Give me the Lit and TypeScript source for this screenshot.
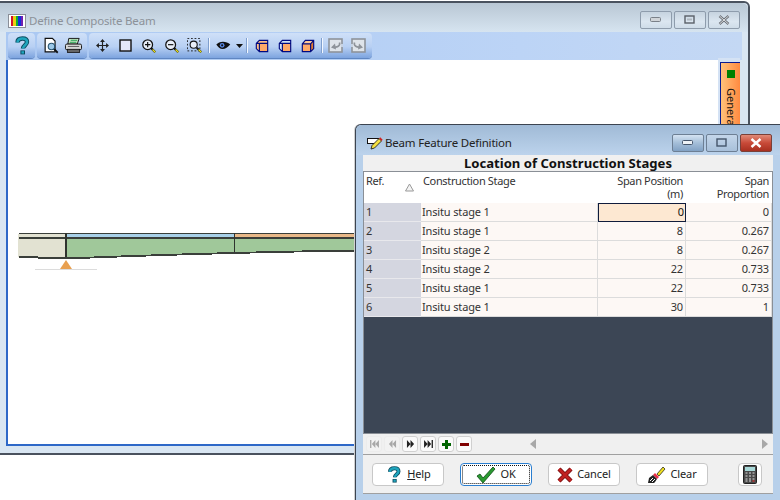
import { LitElement, html, css, svg } from "lit";
import { customElement } from "lit/decorators.js";

const help = (s = 20) => html`<svg width=${s} height=${s} viewBox="0 0 20 20">
  <path d="M5.5 6.5C5.5 3.5 8 2.5 10.5 2.5c3 0 4.5 1.6 4.5 3.6 0 3-4 3.2-4 6.4" fill="none" stroke="#0b4a5e" stroke-width="4.4"/>
  <rect x="8.4" y="14.4" width="4.6" height="4" fill="#0b4a5e"/>
  <path d="M5.5 6.5C5.5 3.5 8 2.5 10.5 2.5c3 0 4.5 1.6 4.5 3.6 0 3-4 3.2-4 6.4" fill="none" stroke="#1fa5bd" stroke-width="2.6"/>
  <rect x="9.4" y="15.2" width="2.6" height="2.4" fill="#1fa5bd"/></svg>`;

const lens = (inner: unknown) => html`<svg width="16" height="16" viewBox="0 0 18 18">
  <path d="M11 11l5 5" stroke="#111" stroke-width="2.4"/><path d="M13 13l3 3" stroke="#e8e020" stroke-width="1.6"/>
  <circle cx="7.5" cy="7.5" r="5.5" fill="#e8eef8" stroke="#111" stroke-width="1.4"/>${inner}</svg>`;

const backCube = (front: string, top: string) => html`<svg width="14" height="14" viewBox="0 0 16 16">
  <path d="M1.5 5L5 1.5H14.5V14.5H5L1.5 11z" fill=${top}/>
  <rect x="5" y="5" width="9.5" height="9.5" fill=${front}/>
  <path d="M1.5 5L5 1.5H14.5V14.5H5L1.5 11zM5 14.5V5H14.5M1.5 5L5 5" fill="none" stroke="#000a80" stroke-width="1.3"/></svg>`;

const cube = (a: string, b: string, c: string) => html`<svg width="14" height="14" viewBox="0 0 16 16">
  <path d="M1.5 5.5L5 1.5h9.5v9.5l-3.5 3.5H1.5z" fill=${a}/>
  <path d="M11 5.5L14.5 1.5V11L11 14.5z" fill=${b}/><path d="M1.5 5.5L5 1.5H14.5L11 5.5z" fill=${c}/>
  <path d="M1.5 5.5L5 1.5h9.5v9.5l-3.5 3.5H1.5zM1.5 5.5H11V14.5M11 5.5l3.5-4" fill="none" stroke="#000a80" stroke-width="1.3"/></svg>`;

const doc = (flip: boolean) => html`<svg width="15" height="15" viewBox="0 0 15 15" class=${flip ? "flip" : ""}>
  <rect x="1" y="1" width="13" height="13" fill="#dfe4ea" stroke="#8e939a" stroke-width="1.6"/>
  <path d="M11.5 4.5C12.5 8 9 9.5 6 9" fill="none" stroke="#8e939a" stroke-width="1.6"/>
  <path d="M3 9.5L7 5.5 8 11.5z" fill="#8e939a"/>
  <rect x="13" y="6" width="2" height="3" fill="#c8d4e4"/></svg>`;

const navIcon = (d: string) => html`<svg width="9" height="8" viewBox="0 0 10 9"><path d=${d} fill="currentColor"/></svg>`;

const beamSteps: [number, number, number][] = [
  [66, 94, 257], [94, 121, 256], [121, 151, 255], [151, 182, 254],
  [182, 217, 253], [217, 256, 252], [256, 302, 251], [302, 365, 250],
];
const stepGap = [90, 117, 146, 177, 212, 250, 294, 365];

@customElement("app-root")
export class AppRoot extends LitElement {
  static styles = css`
    :host { display: block; position: relative; width: 780px; height: 500px; overflow: hidden; background: #fff;
      font-family: "Noto Sans", "Liberation Sans", sans-serif; font-size: 11px; color: #222; }
    .win { position: absolute; box-sizing: border-box; display: flex; flex-direction: column; }
    .w1 { left: -2px; top: 1px; width: 752px; height: 454px; border: 2px solid #4a525e;
      border-top-right-radius: 6px; background: #d9e6f2; padding: 0 6px 7px 6px; }
    .tb1 { height: 29px; flex: none; display: flex; align-items: center; gap: 3px; margin: 0 -6px; padding: 7px 8px 0 8px; box-sizing: border-box;
      background: linear-gradient(#b9c7d4, #d6e4f0); border-radius: 0 6px 0 0; }
    .t1 { color: #8c9299; font-size: 11.5px; letter-spacing: -0.2px; flex: 1; line-height: 16px; }
    .appicon { width: 18px; height: 14px; box-sizing: border-box; background: #fff; border: 1px solid #8a8f98; display: flex; padding: 1px 2px; }
    .appicon i { flex: 1; }
    .wbtns { display: flex; gap: 2px; }
    .wb { width: 32px; height: 18px; box-sizing: border-box; border: 1px solid #8e9cac; border-radius: 2px; display: flex; align-items: center; justify-content: center;
      background: linear-gradient(#c6d3df, #dbe6f0 60%, #cfdce8); }
    .w1 .wbtns { margin-top: -3px; }
    .toolbar { height: 28px; flex: none; background: linear-gradient(90deg, #aac8f2, #bcd4f6 70%, #c4d8f4); display: flex; gap: 2px; padding: 1px 0 2px 2px; box-sizing: border-box; }
    .grp { display: flex; align-items: center; height: 25px; border-radius: 4px; background: linear-gradient(#cfe0f8, #b8d0f3 55%, #7da4df); padding: 0 2px; box-shadow: 0 1px 0 #5f86c2; }
    .ti { width: 23px; height: 22px; display: flex; align-items: center; justify-content: center; flex: none; }
    .ti.eye { width: 22px; }
    .ti.arrow { width: 10px; }
    .sep { width: 1px; height: 15px; background: #f2f7ff; margin: 0 2px 0 3px; box-shadow: -1px 0 0 #7f9fce; flex: none; }
    .sep.s3 { margin: 0 1px 0 3px; }
    .flip { transform: scaleX(-1); }
    .main { flex: 1; display: flex; border: 2px solid #2e68c8; border-width: 0 0 2px 2px; min-height: 0; }
    .canvas { flex: 1; position: relative; background: #fff; }
    .canvas svg { position: absolute; left: 0; top: 0; }
    .side { width: 22px; flex: none; background: #d4e2f4; padding: 4px 0 0 2px; margin: -2px 2px 0 0; box-sizing: border-box; }
    .tab { width: 20px; height: 90px; box-sizing: border-box; border: 1px solid #0a1a90; border-right: 0; background: linear-gradient(90deg, #ffc27a, #ff8a40); display: flex; flex-direction: column; align-items: center; padding-top: 7px; gap: 10px; }
    .tab b { width: 8px; height: 8px; background: #008000; flex: none; }
    .tab span { writing-mode: vertical-rl; color: #111; font-size: 11px; line-height: 12px; }

    .w2 { left: 355px; top: 124px; width: 430px; height: 380px; background: #b8d0ea; border: 1px solid #3c4450; border-bottom: 0; border-radius: 6px 0 0 0; padding: 0 0 0 7px; box-shadow: -1px 0 0 #d0d0d0; }
    .tb2 { height: 30px; flex: none; margin: 0 0 0 -7px; padding: 5px 12px 0 11px; display: flex; align-items: center; gap: 1px; box-sizing: border-box;
      background: linear-gradient(#a0bad6, #bcd3ec); border-radius: 6px 0 0 0; }
    .t2 { flex: 1; font-size: 11.5px; letter-spacing: -0.2px; color: #222; line-height: 16px; }
    .tb2 .wb { background: linear-gradient(#d4e2f2, #a4bed8 50%, #82a2c4); border-color: #6d7f94; }
    .tb2 .wb.c { background: linear-gradient(#e08a78, #c84a38 50%, #a83020); border-color: #7a4038; }
    .tb2 .wb.m { background: linear-gradient(#c4d6ea, #a8c0da); }
    .body { flex: none; display: flex; flex-direction: column; width: 410px; }
    h1 { margin: 0; height: 16px; flex: none; text-align: center; font-size: 13.1px; line-height: 16px; font-weight: 700; color: #111; background: #f0f0f0; }
    .table { height: 263px; flex: none; box-sizing: border-box; border: 1px solid #8a8f96; background: #3c4655; display: flex; flex-direction: column; }
    .row { display: grid; grid-template-columns: 57px 177px 88px 86px; flex: none; }
    .head { height: 31px; background: #fff; }
    .head div { padding: 2px 2px 0 2px; line-height: 13px; color: #333; position: relative; letter-spacing: -0.35px; }
    .head .r { text-align: right; padding-right: 3px; }
    .tri { position: absolute; right: 7px; top: 11px; }
    .r19 { height: 19px; background: #fdf8f5; }
    .r19 div { box-sizing: border-box; padding: 0 3px 0 1px; line-height: 18px; border-bottom: 1px solid #dcdcdc; border-right: 1px solid #dcdcdc; color: #333; white-space: nowrap; letter-spacing: -0.15px; }
    .r19 .ref { background: #d4d6e0; border-right: 0; padding-left: 2px; border-bottom-color: #e8e8ec; }
    .r19 .r { text-align: right; padding-right: 2px; }
    .r19 .sel { background: #fde8d2; border: 1.5px solid #101c3c; line-height: 16px; padding-right: 1px; color: #111; }
    .dark { flex: 1; }
    .nav { height: 20px; flex: none; background: #f0f0f0; display: flex; align-items: center; padding-left: 3px; gap: 2px; }
    .nb { width: 16px; height: 16px; box-sizing: border-box; border: 1px solid #d0d0d0; border-radius: 3px; background: #fafafa; display: flex; align-items: center; justify-content: center; color: #222; }
    .nb.off { color: #a8a8a8; border-color: #ececec; background: #f2f2f2; }
    .nb.add { color: #006400; }
    .nb.del { color: #800000; }
    .nb svg { display: block; }
    .scr { flex: 1; display: flex; justify-content: space-between; align-items: center; padding: 0 5px 0 56px; color: #a8a8a8; }
    .foot { display: flex; align-items: flex-start; padding: 8px 0 0 9px; box-sizing: border-box; border-top: 1px solid #a0a0a0; border-bottom: 1px solid #a0a0a0; height: 40px; flex: none; background: #f0f0f0; }
    .btn { width: 72px; height: 23px; box-sizing: border-box; border: 1px solid #c8c8c8; border-radius: 4px; background: #fff; display: flex; align-items: center; justify-content: center; gap: 4px; margin-right: 16px; color: #222; font-size: 11px; letter-spacing: -0.1px; font-family: "Noto Sans", sans-serif; padding: 0; }
    .btn span { line-height: 15px; margin-top: -2px; }
    .btn.ok { border: 1px solid #2a7ed0; outline: 1px dotted #111; outline-offset: -3px; }
    .btn.calc { width: 24px; margin: 0 0 0 14px; }
    u { text-decoration: underline; }
  `;

  render() {
    const rows = [
      ["1", "Insitu stage 1", "0", "0"], ["2", "Insitu stage 1", "8", "0.267"], ["3", "Insitu stage 2", "8", "0.267"],
      ["4", "Insitu stage 2", "22", "0.733"], ["5", "Insitu stage 1", "22", "0.733"], ["6", "Insitu stage 1", "30", "1"],
    ];
    return html`
      <div class="win w1">
        <div class="tb1">
          <div class="appicon">${["#d0142c", "#e8d010", "#10b030", "#1030d8", "#7020b0"].map((c) => html`<i style="background:${c}"></i>`)}</div>
          <div class="t1">Define Composite Beam</div>
          <div class="wbtns">
            <div class="wb"><svg width="12" height="6"><rect x=".5" y=".5" width="10" height="4" rx="1" fill="#d0d4d8" stroke="#7a8088"/></svg></div>
            <div class="wb"><svg width="12" height="10"><rect x="1" y="1" width="9" height="7" fill="none" stroke="#5a6068" stroke-width="1.4"/><rect x="3" y="3.5" width="5" height="2" fill="#b0b8c0"/></svg></div>
            <div class="wb"><svg width="12" height="10"><path d="M1.5 1l9 8M10.5 1l-9 8" stroke="#6a7078" stroke-width="2.4"/><path d="M1.5 1l9 8M10.5 1l-9 8" stroke="#e8e8e8" stroke-width=".9"/></svg></div>
          </div>
        </div>
        <div class="toolbar">
          <div class="grp"><div class="ti">${help()}</div></div>
          <div class="grp">
            <div class="ti"><svg width="18" height="18" viewBox="0 0 20 20"><path d="M3.5 1.5h8l3 3v12h-11z" fill="#fff" stroke="#111" stroke-width="1.3"/><path d="M12.5 12.5l5 5" stroke="#111" stroke-width="2"/><circle cx="10.5" cy="10.5" r="3.6" fill="#9cc8e8" stroke="#24506e" stroke-width="1.2"/></svg></div>
            <div class="ti"><svg width="19" height="17" viewBox="0 0 20 18"><path d="M5 1.5h11l-2 6H4z" fill="#d0e8c8" stroke="#111"/><path d="M7 3.5h7M6 5.5h7" stroke="#20a050" stroke-width="1.2"/><rect x="1.5" y="7.5" width="17" height="6" rx="1.5" fill="#d8d8d8" stroke="#111"/><rect x="3.5" y="13" width="13" height="3.5" fill="#666" stroke="#111" stroke-width=".8"/><path d="M4 10h12" stroke="#555"/></svg></div>
          </div>
          <div class="grp">
            <div class="ti"><svg width="13" height="13" viewBox="0 0 17 17"><path d="M8.5 2v13M2 8.5h13" stroke="#222" stroke-width="1.5"/><path d="M8.5 0l3.2 3.8h-6.4zM8.5 17l3.2-3.8h-6.4zM0 8.5l3.8-3.2v6.4zM17 8.5l-3.8-3.2v6.4z" fill="#222"/></svg></div>
            <div class="ti"><svg width="13" height="13"><rect x="1" y="1" width="11" height="11" fill="#e6e8fa" stroke="#111" stroke-width="1.4"/></svg></div>
            <div class="ti">${lens(svg`<path d="M4.5 7.5h6M7.5 4.5v6" stroke="#111" stroke-width="1.3"/>`)}</div>
            <div class="ti">${lens(svg`<path d="M4.5 7.5h6" stroke="#111" stroke-width="1.3"/>`)}</div>
            <div class="ti"><svg width="16" height="16" viewBox="0 0 18 18"><rect x=".5" y=".5" width="14" height="14" fill="none" stroke="#111" stroke-dasharray="2 2"/><path d="M11 11l5 5" stroke="#111" stroke-width="2.4"/><path d="M13 13l3 3" stroke="#e8e020" stroke-width="1.6"/><circle cx="7.5" cy="7.5" r="4" fill="#e8eef8" stroke="#111" stroke-width="1.2"/></svg></div>
            <div class="sep"></div>
            <div class="ti eye"><svg width="15" height="9" viewBox="0 0 16 10"><path d="M0 4C3 0 11-.5 15.5 4 13 7 10 9 7 9 4 9 2 7 0 4z" fill="#111"/><circle cx="6.5" cy="4.8" r="2.6" fill="#5a8ae8"/><circle cx="6.5" cy="4.8" r="1.2" fill="#111"/></svg></div>
            <div class="ti arrow"><svg width="7" height="4"><path d="M0 0h7L3.5 4z" fill="#111"/></svg></div>
            <div class="sep"></div>
            <div class="ti">${backCube("#ffa968", "#ffc088")}</div>
            <div class="ti">${backCube("#ffa968", "#cfe2f8")}</div>
            <div class="ti">${cube("#ffa968", "#e07830", "#ffc898")}</div>
            <div class="sep s3"></div>
            <div class="ti">${doc(false)}</div>
            <div class="ti">${doc(true)}</div>
          </div>
        </div>
        <div class="main">
          <div class="canvas">
            <svg width="710" height="386" shape-rendering="crispEdges">
              <g transform="translate(-8,-60)">
                <rect x="18" y="234" width="48" height="23" fill="#e2e2d2"/>
                <rect x="66" y="234" width="168" height="3" fill="#a8d0e8"/>
                <rect x="235" y="234" width="130" height="3" fill="#e8b888"/>
                ${beamSteps.map(([a, b, y]) => svg`<rect x=${a} y="238" width=${b - a} height=${y - 238} fill="#a0c89a"/>`)}
                <rect x="19" y="233" width="346" height="1" fill="#3a3f3a"/>
                <rect x="19" y="237" width="346" height="2" fill="#3a3f3a"/>
                <rect x="65" y="233" width="2" height="25" fill="#2f332f"/>
                <rect x="234" y="233" width="1" height="20" fill="#2f332f"/>
                <rect x="19" y="256" width="19" height="2" fill="#3a3f3a"/>
                <rect x="38" y="257" width="28" height="2" fill="#3a3f3a"/>
                ${beamSteps.map(([a, b, y], i) => svg`<rect x=${a} y=${y} width=${stepGap[i] - a} height="2" fill="#3a3f3a"/><rect x=${stepGap[i]} y=${y} width=${b - stepGap[i]} height="1" fill="#3a3f3a"/>`)}
                <rect x="35" y="269" width="62" height="1" fill="#dcdcdc"/>
                <path d="M60 269L66 260L72 269z" fill="#e8a050" shape-rendering="auto"/>
              </g>
            </svg>
          </div>
          <div class="side"><div class="tab"><b></b><span>General</span></div></div>
        </div>
      </div>

      <div class="win w2">
        <div class="tb2">
          <svg width="17" height="14" viewBox="0 0 17 14"><rect x=".5" y="2.5" width="11" height="5" fill="#fff" stroke="#111"/><path d="M4 13l1-3.5L12 2.5 14.5 5l-7 7z" fill="#f4e040" stroke="#222" stroke-width=".9"/><path d="M12 2.5L14.5 5l1.2-1.2-2.5-2.5z" fill="#d02020"/></svg>
          <div class="t2">Beam Feature Definition</div>
          <div class="wbtns">
            <div class="wb"><svg width="12" height="6"><rect x=".5" y=".5" width="10" height="4" rx="1" fill="#eef2f6" stroke="#44546a"/></svg></div>
            <div class="wb m"><svg width="12" height="10"><rect x="1" y="1" width="9" height="7" fill="none" stroke="#44546a" stroke-width="1.4"/></svg></div>
            <div class="wb c"><svg width="12" height="10"><path d="M1.5 1l9 8M10.5 1l-9 8" stroke="#fff" stroke-width="2.4"/></svg></div>
          </div>
        </div>
        <div class="body">
          <h1>Location of Construction Stages</h1>
          <div class="table">
            <div class="row head">
              <div>Ref.<svg class="tri" width="9" height="9"><path d="M4.5 1L8.5 8H.5z" fill="#f4f4f4" stroke="#999"/></svg></div>
              <div>Construction Stage</div>
              <div class="r">Span Position<br />(m)</div>
              <div class="r">Span<br />Proportion</div>
            </div>
            ${rows.map((r, i) => html`<div class="row r19">
              <div class="ref">${r[0]}</div><div>${r[1]}</div>
              <div class="r ${i === 0 ? "sel" : ""}">${r[2]}</div><div class="r">${r[3]}</div>
            </div>`)}
            <div class="dark"></div>
          </div>
          <div class="nav">
            <div class="nb off">${navIcon("M0 0h1.5v9H0zM6 0v9L2 4.5zM10 0v9L6 4.5z")}</div>
            <div class="nb off">${navIcon("M5 0v9L1 4.5zM9 0v9L5 4.5z")}</div>
            <div class="nb">${navIcon("M1 0v9l4-4.5zM5 0v9l4-4.5z")}</div>
            <div class="nb">${navIcon("M0 0v9l4-4.5zM4 0v9l4-4.5zM8.5 0H10v9H8.5z")}</div>
            <div class="nb add"><svg width="9" height="9"><path d="M3 0h3v3h3v3H6v3H3V6H0V3h3z" fill="currentColor"/></svg></div>
            <div class="nb del"><svg width="9" height="9"><rect y="3" width="9" height="3" fill="currentColor"/></svg></div>
            <div class="scr">
              <svg width="6" height="10"><path d="M6 0v10L0 5z" fill="currentColor"/></svg>
              <svg width="6" height="10"><path d="M0 0v10l6-5z" fill="currentColor"/></svg>
            </div>
          </div>
          <div class="foot">
            <button class="btn">${help(18)}<span><u>H</u>elp</span></button>
            <button class="btn ok"><svg width="20" height="18" viewBox="0 0 20 18"><path d="M1 10l3-2 3 4L17 1l2 2L7 17z" fill="#2a9a30" stroke="#0c4a14" stroke-width=".8"/></svg><span>OK</span></button>
            <button class="btn"><svg width="16" height="16" viewBox="0 0 16 16"><path d="M2 2l12 12M14 2L2 14" stroke="#7a1010" stroke-width="4.4"/><path d="M2 2l12 12M14 2L2 14" stroke="#c02020" stroke-width="2.6"/></svg><span>Cancel</span></button>
            <button class="btn"><svg width="19" height="18" viewBox="0 0 19 18"><path d="M10 8l6-7 2 2-6 7z" fill="#f0e020" stroke="#111" stroke-width=".7"/><path d="M8 7l4 4-2 2-4-4z" fill="#e83048"/><path d="M6 9l4 4-2 3-1 1H1l1-5z" fill="#222"/><path d="M3 15l3-3M5 16l3-3" stroke="#fff"/></svg><span>Clear</span></button>
            <button class="btn calc"><svg width="14" height="19" viewBox="0 0 14 19"><rect x=".5" y=".5" width="13" height="18" rx="1" fill="#4a4a4a" stroke="#222"/><rect x="2" y="2" width="10" height="4" fill="#a8d8d8"/><path d="M2.5 8h2M6 8h2M9.5 8h2M2.5 11h2M6 11h2M9.5 11h2M2.5 14h2M6 14h2" stroke="#ddd" stroke-width="1.2"/><path d="M9.5 16h2" stroke="#e03030" stroke-width="1.2"/><path d="M2.5 16h2M6 16h2M9.5 14h2" stroke="#ddd" stroke-width="1.2"/></svg></button>
          </div>
        </div>
      </div>
    `;
  }
}
